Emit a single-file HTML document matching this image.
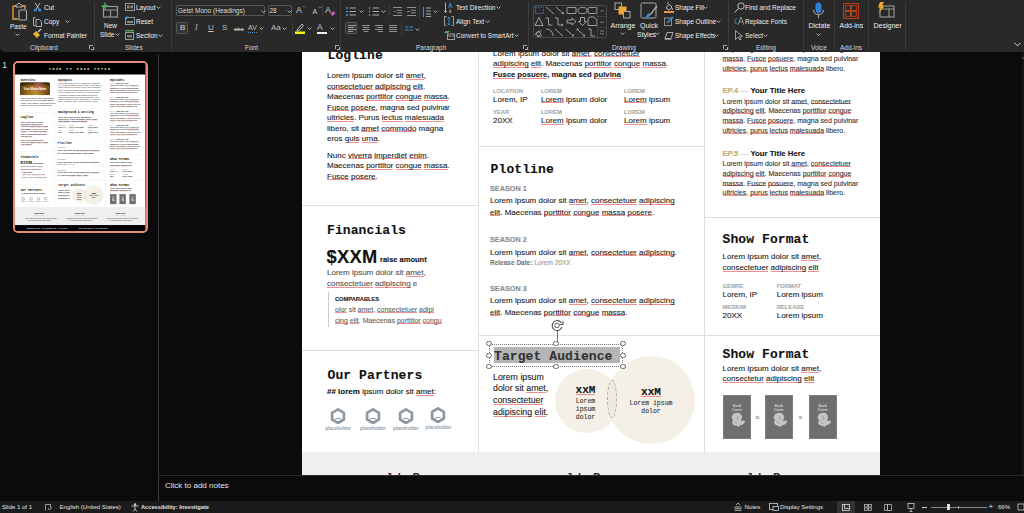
<!DOCTYPE html>
<html><head><meta charset="utf-8">
<style>
*{margin:0;padding:0;box-sizing:border-box}
html,body{width:1024px;height:513px;overflow:hidden;background:#0b0b0b;font-family:"Liberation Sans",sans-serif}
#ribbon{position:absolute;left:0;top:0;width:1024px;height:52px;background:#292929;border-radius:0 0 0 5px;box-shadow:0 0.5px 1px rgba(0,0,0,0.6)}
#ribbon .t{position:absolute;font-size:6.5px;line-height:8px;color:#efefef;white-space:nowrap}
#ribbon .g{color:#d8d8d8}
#ribbon .ic{position:absolute;overflow:visible}
.chev{position:absolute;width:3px;height:3px;border-right:0.8px solid #ccc;border-bottom:0.8px solid #ccc;transform:rotate(45deg)}
.sep{position:absolute;top:2px;width:1px;height:48px;background:#3d3d3d}
.vsep{position:absolute;width:1px;background:#3d3d3d}
.box{position:absolute;border:1px solid #555;border-radius:2px}
.la{position:absolute;width:4.5px;height:4.5px;border-left:0.7px solid #aaa;border-top:0.7px solid #aaa;margin:0.5px 0 0 0.5px}
.la:after{content:"";position:absolute;left:1.2px;top:1.2px;width:2.5px;height:2.5px;border-right:0.8px solid #aaa;border-bottom:0.8px solid #aaa}
#left{position:absolute;left:0;top:52px;width:158px;height:449px;background:#0b0b0b}
#vdiv{position:absolute;left:158px;top:54px;width:1px;height:447px;background:#3a3a3a}
#num{position:absolute;left:2.3px;top:8px;font-size:8.5px;color:#ddd;transform:scaleY(1.1)}
#thumb{position:absolute;left:13px;top:9px;width:134.5px;height:172px;border:2px solid #e88c78;border-radius:5px;overflow:hidden;background:#000}
#thumb .sc{position:absolute;left:0;top:0;width:578px;height:745px;transform:scale(0.2257,0.2257);transform-origin:0 0}
#canvas{position:absolute;left:159px;top:52px;width:865px;height:423px;overflow:hidden;background:#0b0b0b}
#canvas .sc{position:absolute;left:143px;top:-238px;width:578px;height:745px}
#notes{position:absolute;left:159px;top:475px;width:865px;height:26px;background:#0b0b0b;border-top:1.5px solid #2a2a2a}
#notes span{position:absolute;left:6px;top:5px;font-size:8px;color:#e4e4e4}
#status{position:absolute;left:0;top:501px;width:1024px;height:12px;background:#1b1b1b}
#status .t{position:absolute;top:2.5px;font-size:6px;line-height:7px;color:#e2e2e2;white-space:nowrap}
/* slide */
.sl{position:relative;width:578px;height:745px;background:#fff;overflow:hidden;color:#1a1a1a;-webkit-text-stroke:0.1px currentColor}
.sl div{position:absolute;white-space:nowrap}
.hdr{left:0;top:0;width:578px;height:51px;background:#000}
.hdr span{position:absolute;left:0;width:578px;top:17px;text-align:center;font:bold 14px/16px "Liberation Mono",monospace;letter-spacing:7px;color:#f4ecd8}
.vl{width:1px;background:#dedede}
.hl{height:1px;background:#dedede}
.h{font:bold 13px/15px "Liberation Mono",monospace;color:#111;letter-spacing:0.1px}
.p{font-size:8px;line-height:10.5px;color:#222}
.p u,.v u,.p7 u,.m u{text-decoration:none;background:linear-gradient(#f08080,#f08080) 0 calc(100% - 0.3px)/100% 0.9px no-repeat}
#thumb .sel{display:none}
.hd{width:5.2px;height:5.2px;border-radius:50%;background:#fff;border:0.8px solid #666}
.b{font-weight:bold;line-height:1.15;color:#111}
.big{letter-spacing:0.3px;font:bold 18.3px/1.15 "Liberation Sans",sans-serif;color:#111}
.lab{font-weight:bold;font-size:5.8px;line-height:7px;color:#a8a8a8}
.v{font-size:8px;line-height:9px;color:#222;margin-top:0.7px}
.ssn{font-weight:bold;font-size:7.3px;line-height:8px;color:#8a8a8a}
.img{border-radius:7px;background:radial-gradient(ellipse 30px 35px at 62% 30%,rgba(190,90,90,0.9),rgba(160,80,60,0) 100%),linear-gradient(180deg,rgba(20,10,0,0.85) 0%,rgba(20,10,0,0) 35%),linear-gradient(100deg,#4a3510 0%,#9a7020 30%,#c09030 55%,#8a6020 80%,#5a3a10 100%)}
.img span{position:absolute;left:0;width:100%;top:22px;text-align:center;font-weight:bold;font-size:12.4px;line-height:14px;color:#fff}
.logo{width:16px;height:22px}
.logo svg{position:absolute;left:0;top:0}
.logo i{position:absolute;left:-7px;top:17px;width:30px;text-align:center;font-style:normal;font-weight:bold;font-size:4.6px;line-height:7px;color:#a3abb3}
.circ{border-radius:50%;background:#f4f0e8}
.m{font-family:"Liberation Mono",monospace;text-align:center;white-space:nowrap}
.ep{width:170px;height:60px}
.ep div{position:relative}
.et{font-weight:bold;font-size:7.8px;line-height:9px;color:#111}
.et span{color:#c6ad72}
.et em{font-style:normal;color:#bbb;font-weight:normal}
.p7{font-size:7px;line-height:9.77px;color:#333;margin-top:1.5px}
.book{width:27.5px;height:44.5px;background:#6f6f6f;border:1px solid #7d7d7d}
.book i{position:absolute;left:0;width:100%;top:8px;text-align:center;font:normal 3.5px/4px "Liberation Serif",serif;color:#ddd;letter-spacing:0.2px}
.book b{position:absolute;left:8px;top:16px;width:12px;height:18px;border-radius:50% 50% 30% 40%;background:#bdbdbd}
.x{font-size:8px;color:#7a8fa0}
.ft{left:0;top:638px;width:578px;height:80px;background:#efefef}
.jd{width:124px;text-align:center;font:bold 10.5px/13px "Liberation Sans",sans-serif;letter-spacing:-0.2px;color:#2a2a2a}
.jd small{display:block;margin-top:3px;font:normal 5px/8px "Liberation Sans",sans-serif;color:#b8a070;letter-spacing:1px}
.jd p{margin-top:4px;font:normal 6px/9.3px "Liberation Sans",sans-serif;color:#555;letter-spacing:0}
.fb{left:0;top:718px;width:578px;height:27px;background:#000}
.fb span{position:relative;display:inline-block;margin:12px 0 0 50px;font:bold 5.5px "Liberation Mono",monospace;color:#d8d0e0}
</style></head><body>
<div id="ribbon">
<!-- Clipboard -->
<svg class="ic" style="left:11px;top:2px" width="18" height="19" viewBox="0 0 18 19"><path d="M2 4h3M11 4h3v3M2 4v13h5" fill="none" stroke="#f0a830" stroke-width="1.3"/><path d="M5 3.5l3-2.5 3 2.5v1.5H5z" fill="none" stroke="#bbb" stroke-width="1"/><rect x="8" y="8" width="7.5" height="10" rx="1" fill="none" stroke="#aaa" stroke-width="1.1"/></svg>
<div class="t" style="left:10px;top:22.5px">Paste</div>
<svg class="ic" style="left:14.8px;top:32.5px" width="5" height="3" viewBox="0 0 5 3"><path d="M0.6 0.6l1.9 1.9 1.9-1.9" fill="none" stroke="#d0d0d0" stroke-width="0.85"/></svg>
<svg class="ic" style="left:33px;top:3px" width="9" height="9" viewBox="0 0 9 9"><path d="M2 0l4 6M7 0L3 6" stroke="#ccc" stroke-width="0.9"/><circle cx="2.3" cy="7" r="1.6" fill="#3b8fd9"/><circle cx="6.7" cy="7" r="1.6" fill="#3b8fd9"/></svg>
<div class="t" style="left:44px;top:3.5px">Cut</div>
<svg class="ic" style="left:33px;top:16px" width="9" height="11" viewBox="0 0 9 11"><path d="M2.5 1.5h-2v8h2M3 3.5h3.5l2 2v5h-5.5z" fill="none" stroke="#bbb" stroke-width="0.9"/></svg>
<div class="t" style="left:44px;top:18px">Copy</div>
<svg class="ic" style="left:64.5px;top:19.8px" width="5" height="3" viewBox="0 0 5 3"><path d="M0.6 0.6l1.9 1.9 1.9-1.9" fill="none" stroke="#d0d0d0" stroke-width="0.85"/></svg>
<svg class="ic" style="left:32px;top:29px" width="10" height="10" viewBox="0 0 10 10"><path d="M1 5l4 4 3-3-4-4z" fill="#f0b030"/><path d="M6 3l3-3" stroke="#ccc" stroke-width="1.2"/></svg>
<div class="t" style="left:44px;top:32px">Format Painter</div>
<div class="t g" style="left:30px;top:43.5px">Clipboard</div>
<div class="la"  style="left:88px;top:44px"></div>
<div class="sep" style="left:94px"></div>
<!-- Slides -->
<svg class="ic" style="left:101px;top:2px" width="18" height="16" viewBox="0 0 18 16"><rect x="2.5" y="4.5" width="14" height="10.5" fill="none" stroke="#999" stroke-width="1.2"/><path d="M2.5 8h14M9.5 8v7" stroke="#999" stroke-width="1.2"/><path d="M4 0.5v7M0.5 4h7" stroke="#4cb85c" stroke-width="1.3"/></svg>
<div class="t" style="left:104px;top:22px">New</div>
<div class="t" style="left:100px;top:30.5px">Slide</div>
<svg class="ic" style="left:114.8px;top:32.5px" width="5" height="3" viewBox="0 0 5 3"><path d="M0.6 0.6l1.9 1.9 1.9-1.9" fill="none" stroke="#d0d0d0" stroke-width="0.85"/></svg>
<svg class="ic" style="left:125px;top:3px" width="10" height="8" viewBox="0 0 10 8"><rect x="0.5" y="0.5" width="9" height="7" fill="none" stroke="#999"/><rect x="2" y="2.5" width="2.5" height="3" fill="#888"/><rect x="5.5" y="2.5" width="2.5" height="3" fill="#888"/></svg>
<div class="t" style="left:136px;top:3.5px">Layout</div>
<svg class="ic" style="left:156.0px;top:6.1px" width="5" height="3" viewBox="0 0 5 3"><path d="M0.6 0.6l1.9 1.9 1.9-1.9" fill="none" stroke="#d0d0d0" stroke-width="0.85"/></svg>
<svg class="ic" style="left:125px;top:16px" width="10" height="9" viewBox="0 0 10 9"><rect x="0.5" y="1.5" width="9" height="7" fill="none" stroke="#999"/><rect x="2" y="5" width="6" height="2" fill="#888"/><path d="M1 3.5l2-2.5M1 1h2.5" stroke="#3b8fd9" stroke-width="1.2"/></svg>
<div class="t" style="left:136px;top:18px">Reset</div>
<svg class="ic" style="left:125px;top:30px" width="9" height="10" viewBox="0 0 9 10"><path d="M0 0.7h9" stroke="#4cb85c" stroke-width="1.3"/><rect x="0.5" y="2.5" width="8" height="7" fill="none" stroke="#999"/><rect x="2" y="5" width="5" height="2.5" fill="#777"/></svg>
<div class="t" style="left:136px;top:32px">Section</div>
<svg class="ic" style="left:157.7px;top:34.0px" width="5" height="3" viewBox="0 0 5 3"><path d="M0.6 0.6l1.9 1.9 1.9-1.9" fill="none" stroke="#d0d0d0" stroke-width="0.85"/></svg>
<div class="t g" style="left:125px;top:43.5px">Slides</div>
<div class="sep" style="left:171px"></div>
<!-- Font -->
<div class="box" style="left:176px;top:5px;width:89px;height:11px"></div>
<div class="t" style="left:178px;top:7px;color:#ddd">Geist Mono (Headings)</div>
<svg class="ic" style="left:260.5px;top:10.1px" width="5" height="3" viewBox="0 0 5 3"><path d="M0.6 0.6l1.9 1.9 1.9-1.9" fill="none" stroke="#d0d0d0" stroke-width="0.85"/></svg>
<div class="box" style="left:268px;top:5px;width:24px;height:11px"></div>
<div class="t" style="left:269.5px;top:7px;color:#ddd">28</div>
<svg class="ic" style="left:286.8px;top:10.1px" width="5" height="3" viewBox="0 0 5 3"><path d="M0.6 0.6l1.9 1.9 1.9-1.9" fill="none" stroke="#d0d0d0" stroke-width="0.85"/></svg>
<div class="t" style="left:296px;top:6px;font-size:9px;color:#ccc">A</div><svg class="ic" style="left:302px;top:5px" width="4" height="3" viewBox="0 0 4 3"><path d="M0.5 2.5l1.5-1.5 1.5 1.5" fill="none" stroke="#3b8fd9" stroke-width="0.8"/></svg>
<div class="t" style="left:312.5px;top:8px;font-size:7px;color:#ccc">A</div><svg class="ic" style="left:317.5px;top:6px" width="4" height="3" viewBox="0 0 4 3"><path d="M0.5 0.5l1.5 1.5 1.5-1.5" fill="none" stroke="#3b8fd9" stroke-width="0.8"/></svg>
<div class="vsep" style="left:322px;top:5px;height:12px"></div>
<div class="t" style="left:325px;top:6px;font-size:9px;color:#ccc">A</div>
<div style="position:absolute;left:331px;top:12px;width:4px;height:3px;background:#c060c0;transform:rotate(-40deg)"></div>
<div class="box" style="left:176px;top:22px;width:12px;height:12px;background:#333"></div>
<div class="t" style="left:180px;top:24px;font-size:8px;color:#ddd">B</div>
<div class="t" style="left:195px;top:24px;font-size:8px;font-style:italic;color:#bbb;font-family:'Liberation Serif'">I</div>
<div class="t" style="left:208px;top:24px;font-size:8px;text-decoration:underline;color:#bbb">U</div>
<div class="t" style="left:222px;top:24px;font-size:8px;color:#bbb">S</div>
<div class="t" style="left:234px;top:25px;font-size:6px;text-decoration:line-through;color:#bbb">abc</div>
<div class="t" style="left:248px;top:23.5px;font-size:7px;color:#bbb">AV</div>
<div style="position:absolute;left:248px;top:32px;width:9px;height:1px;border-top:1px dotted #3b8fd9"></div>
<svg class="ic" style="left:259.2px;top:27.1px" width="5" height="3" viewBox="0 0 5 3"><path d="M0.6 0.6l1.9 1.9 1.9-1.9" fill="none" stroke="#d0d0d0" stroke-width="0.85"/></svg>
<div class="t" style="left:271px;top:24px;font-size:8px;color:#bbb">Aa</div>
<svg class="ic" style="left:282.1px;top:27.1px" width="5" height="3" viewBox="0 0 5 3"><path d="M0.6 0.6l1.9 1.9 1.9-1.9" fill="none" stroke="#d0d0d0" stroke-width="0.85"/></svg>
<div class="vsep" style="left:292px;top:22px;height:13px"></div>
<svg class="ic" style="left:295px;top:22px" width="10" height="12" viewBox="0 0 10 12"><path d="M2 8l5-6 1.5 1.5-5 5.5H2z" fill="none" stroke="#ccc" stroke-width="0.9"/><rect x="0" y="9.5" width="10" height="2.5" fill="#f2f200"/></svg>
<svg class="ic" style="left:307.4px;top:27.1px" width="5" height="3" viewBox="0 0 5 3"><path d="M0.6 0.6l1.9 1.9 1.9-1.9" fill="none" stroke="#d0d0d0" stroke-width="0.85"/></svg>
<div class="t" style="left:317px;top:22.5px;font-size:8.5px;color:#ccc">A</div>
<div style="position:absolute;left:317px;top:31.5px;width:10px;height:2.5px;background:#eee"></div>
<svg class="ic" style="left:329.5px;top:27.1px" width="5" height="3" viewBox="0 0 5 3"><path d="M0.6 0.6l1.9 1.9 1.9-1.9" fill="none" stroke="#d0d0d0" stroke-width="0.85"/></svg>
<div class="t g" style="left:245px;top:43.5px">Font</div>
<div class="la"  style="left:334px;top:44px"></div>
<div class="sep" style="left:340px"></div>
<!-- Paragraph -->
<svg class="ic" style="left:346px;top:7px" width="10" height="9" viewBox="0 0 10 9"><path d="M0 1h2M0 4.5h2M0 8h2" stroke="#3b8fd9" stroke-width="1.4"/><path d="M3.5 1h6.5M3.5 4.5h6.5M3.5 8h6.5" stroke="#aaa" stroke-width="1"/></svg>
<svg class="ic" style="left:358.8px;top:9.9px" width="5" height="3" viewBox="0 0 5 3"><path d="M0.6 0.6l1.9 1.9 1.9-1.9" fill="none" stroke="#d0d0d0" stroke-width="0.85"/></svg>
<svg class="ic" style="left:369px;top:7px" width="10" height="9" viewBox="0 0 10 9"><path d="M0.5 0v2M0.5 3.5v2M0.5 7v2" stroke="#3b8fd9" stroke-width="1.2"/><path d="M3.5 1h6.5M3.5 4.5h6.5M3.5 8h6.5" stroke="#aaa" stroke-width="1"/></svg>
<svg class="ic" style="left:381.1px;top:9.9px" width="5" height="3" viewBox="0 0 5 3"><path d="M0.6 0.6l1.9 1.9 1.9-1.9" fill="none" stroke="#d0d0d0" stroke-width="0.85"/></svg>
<div class="vsep" style="left:389px;top:5px;height:13px"></div>
<svg class="ic" style="left:393px;top:7px" width="9" height="9" viewBox="0 0 9 9"><path d="M0 0.5h9M4 3.3h5M4 5.8h5M0 8.5h9" stroke="#999" stroke-width="0.9"/><path d="M0.5 4.5h2.5" stroke="#3b8fd9" stroke-width="1"/></svg>
<svg class="ic" style="left:407px;top:7px" width="9" height="9" viewBox="0 0 9 9"><path d="M0 0.5h9M4 3.3h5M4 5.8h5M0 8.5h9" stroke="#999" stroke-width="0.9"/><path d="M0 4.5h3" stroke="#3b8fd9" stroke-width="1.2"/></svg>
<div class="vsep" style="left:419px;top:5px;height:13px"></div>
<svg class="ic" style="left:422px;top:7px" width="9" height="10" viewBox="0 0 9 10"><path d="M1.5 0v10" stroke="#3b8fd9" stroke-width="1.2"/><path d="M4 1h5M4 4h5M4 7h5M4 9.5h5" stroke="#aaa" stroke-width="1"/></svg>
<svg class="ic" style="left:433.1px;top:9.9px" width="5" height="3" viewBox="0 0 5 3"><path d="M0.6 0.6l1.9 1.9 1.9-1.9" fill="none" stroke="#d0d0d0" stroke-width="0.85"/></svg>
<div class="box" style="left:345px;top:22px;width:12px;height:12px;background:#333"></div>
<svg class="ic" style="left:348px;top:25px" width="8" height="7" viewBox="0 0 8 7"><path d="M0 0.5h8M0 2.5h6M0 4.5h8M0 6.5h5" stroke="#bbb" stroke-width="0.8"/></svg>
<svg class="ic" style="left:362px;top:25px" width="8" height="7" viewBox="0 0 8 7"><path d="M0 0.5h8M1 2.5h6M0 4.5h8M1.5 6.5h5" stroke="#aaa" stroke-width="0.8"/></svg>
<svg class="ic" style="left:375px;top:25px" width="8" height="7" viewBox="0 0 8 7"><path d="M0 0.5h8M2 2.5h6M0 4.5h8M3 6.5h5" stroke="#aaa" stroke-width="0.8"/></svg>
<svg class="ic" style="left:389px;top:25px" width="8" height="7" viewBox="0 0 8 7"><path d="M0 0.5h8M0 2.5h8M0 4.5h8M0 6.5h8" stroke="#aaa" stroke-width="0.8"/></svg>
<div class="vsep" style="left:401px;top:22px;height:13px"></div>
<svg class="ic" style="left:405px;top:26px" width="8" height="5" viewBox="0 0 8 5"><path d="M0 1h3.5M4.5 1h3.5M0 4h3.5M4.5 4h3.5" stroke="#3b8fd9" stroke-width="1.2"/></svg>
<svg class="ic" style="left:415.4px;top:27.5px" width="5" height="3" viewBox="0 0 5 3"><path d="M0.6 0.6l1.9 1.9 1.9-1.9" fill="none" stroke="#d0d0d0" stroke-width="0.85"/></svg>
<svg class="ic" style="left:444px;top:2px" width="9" height="11" viewBox="0 0 9 11"><path d="M1.5 0.5v10M0 9l1.5 1.5 1.5-1.5" fill="none" stroke="#bbb" stroke-width="0.9"/><path d="M4.5 6l1.7-5 1.7 5M5.2 4h2" fill="none" stroke="#3b8fd9" stroke-width="0.9"/><path d="M6.2 7v3.5M5 9.5l1.2 1 1.2-1" fill="none" stroke="#bbb" stroke-width="0.8"/></svg>
<div class="t" style="left:456px;top:3.5px">Text Direction</div>
<svg class="ic" style="left:495.9px;top:5.7px" width="5" height="3" viewBox="0 0 5 3"><path d="M0.6 0.6l1.9 1.9 1.9-1.9" fill="none" stroke="#d0d0d0" stroke-width="0.85"/></svg>
<svg class="ic" style="left:444px;top:16px" width="10" height="10" viewBox="0 0 10 10"><path d="M2.5 0.5h-2v9h2M7.5 0.5h2v9h-2" fill="none" stroke="#bbb" stroke-width="0.8"/><path d="M5 1v8M3.5 2.5L5 1l1.5 1.5M3.5 7.5L5 9l1.5-1.5" fill="none" stroke="#3b8fd9" stroke-width="0.9"/></svg>
<div class="t" style="left:456px;top:18px">Align Text</div>
<svg class="ic" style="left:484.9px;top:19.8px" width="5" height="3" viewBox="0 0 5 3"><path d="M0.6 0.6l1.9 1.9 1.9-1.9" fill="none" stroke="#d0d0d0" stroke-width="0.85"/></svg>
<svg class="ic" style="left:444px;top:30px" width="11" height="10" viewBox="0 0 11 10"><path d="M0 3l2-2h4l-2 2z" fill="#4cb85c"/><rect x="3.5" y="4" width="7" height="5.5" fill="none" stroke="#aaa" stroke-width="0.9"/><path d="M3.5 6h7" stroke="#aaa" stroke-width="0.8"/></svg>
<div class="t" style="left:456px;top:32px">Convert to SmartArt</div>
<svg class="ic" style="left:514.4px;top:33.7px" width="5" height="3" viewBox="0 0 5 3"><path d="M0.6 0.6l1.9 1.9 1.9-1.9" fill="none" stroke="#d0d0d0" stroke-width="0.85"/></svg>
<div class="t g" style="left:416px;top:43.5px">Paragraph</div>
<div class="la"  style="left:522px;top:44px"></div>
<div class="sep" style="left:528px"></div>
<!-- Drawing -->
<div class="box" style="left:533px;top:5px;width:74px;height:33px;border-color:#4a4a4a"></div>
<svg class="ic" style="left:533px;top:5px" width="74" height="34" viewBox="0 0 74 34">
<g fill="none" stroke="#bbb" stroke-width="0.8">
<rect x="2.5" y="2" width="8" height="6.5" stroke="#3b8fd9" stroke-dasharray="1.5 1"/>
<path d="M13 2l8 7M23 2l7.5 7M30 8.5h-1.5M30.5 7v1.5"/>
<rect x="34" y="2.5" width="9" height="6" rx="0.5"/>
<ellipse cx="49.5" cy="5.5" rx="4.5" ry="3.2"/>
<rect x="55" y="2.5" width="9" height="6" rx="1.5"/>
<path d="M2 20.5l4-8 4 8z"/>
<path d="M12.5 13h3v7h4"/><path d="M22 13h3v7h5M28.5 19l1.5 1-1.5 1"/>
<path d="M34 15h5v-2l4 3.5-4 3.5v-2h-5z"/>
<path d="M47.5 12.5h4v4h2l-4 4-4-4h2z"/>
<path d="M55 20.5v-6c0-2 1-2.5 3-2.5h3l3 3v5.5z"/>
<path d="M2.5 30c0-3 4-4 5-2s-3 4-4 2 3-5 5-4M9 30c-1 1.5-3 2-5 1"/>
<path d="M13 24c4 0 7 3 7 7M22 24l8 7M32.5 24l8 7M40.5 29.5V31H39M44 24l7.5 7M44 25.5V24h1.5M51.5 29.5V31H50M55 24h3v7h4"/>
</g>
<path d="M64.5 0v34M64.5 11.5h9.5M64.5 22.5h9.5" stroke="#4a4a4a" stroke-width="0.8"/>
<path d="M67.5 6.5l1.5-1.5 1.5 1.5M67 16.5l2 1.5 2-1.5M67 26h4M67 28l2 1.5 2-1.5" fill="none" stroke="#999" stroke-width="0.8"/>
</svg>
<div class="la"  style="left:522px;top:44px"></div>
<svg class="ic" style="left:614px;top:2px" width="17" height="17" viewBox="0 0 17 17"><rect x="1" y="1" width="6.5" height="6.5" fill="none" stroke="#aaa" stroke-width="1"/><rect x="4.5" y="4.5" width="8" height="8" fill="#f0a830"/><rect x="9.5" y="9.5" width="6.5" height="6.5" fill="#2a2a2a" stroke="#aaa" stroke-width="1"/></svg>
<div class="t" style="left:610.5px;top:21.8px;font-size:7px">Arrange</div>
<svg class="ic" style="left:619.8px;top:32.0px" width="5" height="3" viewBox="0 0 5 3"><path d="M0.6 0.6l1.9 1.9 1.9-1.9" fill="none" stroke="#d0d0d0" stroke-width="0.85"/></svg>
<svg class="ic" style="left:640px;top:2px" width="18" height="18" viewBox="0 0 18 18"><rect x="1" y="1" width="15" height="15" rx="1.5" fill="none" stroke="#aaa" stroke-width="1"/><path d="M17 4l-7 9" stroke="#ccc" stroke-width="1.2"/><path d="M7 13c1-2 3-2 3.5-0.5-0.5 2-3 3.5-5.5 4z" fill="#3b8fd9"/></svg>
<div class="t" style="left:640px;top:21.8px;font-size:7px">Quick</div>
<div class="t" style="left:637px;top:30.5px;font-size:7px">Styles</div>
<svg class="ic" style="left:654.9px;top:32.0px" width="5" height="3" viewBox="0 0 5 3"><path d="M0.6 0.6l1.9 1.9 1.9-1.9" fill="none" stroke="#d0d0d0" stroke-width="0.85"/></svg>
<div class="t g" style="left:612px;top:43.5px">Drawing</div>
<svg class="ic" style="left:664px;top:2px" width="10" height="11" viewBox="0 0 10 11"><path d="M2 6l3-4 3 3-3 3z" fill="none" stroke="#ccc" stroke-width="0.9"/><path d="M3.5 1.5l1-1.5" stroke="#ccc"/><path d="M8 6c0.5 1 0.5 2-0.3 2" stroke="#ccc" fill="none"/><rect x="0" y="9" width="10" height="2" fill="#f09040"/></svg>
<div class="t" style="left:675px;top:3.5px">Shape Fill</div>
<svg class="ic" style="left:703.3px;top:5.5px" width="5" height="3" viewBox="0 0 5 3"><path d="M0.6 0.6l1.9 1.9 1.9-1.9" fill="none" stroke="#d0d0d0" stroke-width="0.85"/></svg>
<svg class="ic" style="left:664px;top:16px" width="10" height="10" viewBox="0 0 10 10"><rect x="0.5" y="2" width="7" height="7.5" fill="none" stroke="#aaa" stroke-width="0.8"/><path d="M3 7l6-6" stroke="#3b8fd9" stroke-width="1.6"/></svg>
<div class="t" style="left:675px;top:18px">Shape Outline</div>
<svg class="ic" style="left:716.2px;top:19.6px" width="5" height="3" viewBox="0 0 5 3"><path d="M0.6 0.6l1.9 1.9 1.9-1.9" fill="none" stroke="#d0d0d0" stroke-width="0.85"/></svg>
<svg class="ic" style="left:664px;top:30px" width="10" height="10" viewBox="0 0 10 10"><path d="M1 8.5l2-6h6l-2 6z" fill="none" stroke="#bbb" stroke-width="0.9"/><path d="M0.5 9.5h7" stroke="#888"/></svg>
<div class="t" style="left:675px;top:32px">Shape Effects</div>
<svg class="ic" style="left:714.4px;top:33.7px" width="5" height="3" viewBox="0 0 5 3"><path d="M0.6 0.6l1.9 1.9 1.9-1.9" fill="none" stroke="#d0d0d0" stroke-width="0.85"/></svg>
<div class="la"  style="left:722px;top:44px"></div>
<div class="sep" style="left:727.5px"></div>
<!-- Editing -->
<svg class="ic" style="left:734px;top:2px" width="11" height="11" viewBox="0 0 11 11"><circle cx="7" cy="4" r="3.2" fill="none" stroke="#ccc" stroke-width="0.9"/><path d="M4.6 6.4L0.5 10.5" stroke="#ccc" stroke-width="1"/></svg>
<div class="t" style="left:745px;top:3.5px">Find and Replace</div>
<svg class="ic" style="left:734px;top:16px" width="11" height="10" viewBox="0 0 11 10"><path d="M4 9l3-8 3 8M5.2 6h3.5" fill="none" stroke="#aaa" stroke-width="0.8"/><path d="M3 2.5C1 3 0.5 5 1.5 6.5M0.5 7.5l1.5-1 1 1.5" fill="none" stroke="#3b8fd9" stroke-width="0.9"/></svg>
<div class="t" style="left:745px;top:18px">Replace Fonts</div>
<svg class="ic" style="left:735px;top:30px" width="8" height="10" viewBox="0 0 8 10"><path d="M0.5 0.5v9l2.5-2.5 1.7 3 1.5-0.8-1.7-3H7.5z" fill="none" stroke="#bbb" stroke-width="0.8"/></svg>
<div class="t" style="left:745px;top:32px">Select</div>
<svg class="ic" style="left:763.1px;top:33.7px" width="5" height="3" viewBox="0 0 5 3"><path d="M0.6 0.6l1.9 1.9 1.9-1.9" fill="none" stroke="#d0d0d0" stroke-width="0.85"/></svg>
<div class="t g" style="left:756px;top:43.5px">Editing</div>
<div class="sep" style="left:802.5px"></div>
<svg class="ic" style="left:812px;top:2px" width="13" height="17" viewBox="0 0 13 17"><rect x="3.5" y="0.5" width="6" height="10.5" rx="3" fill="#2f7fd6"/><path d="M1.5 8c0 3 2 4.5 5 4.5s5-1.5 5-4.5M6.5 12.5V16" fill="none" stroke="#bbb" stroke-width="0.9"/></svg>
<div class="t" style="left:808.5px;top:21.8px;font-size:7px">Dictate</div>
<svg class="ic" style="left:815.9px;top:32.5px" width="5" height="3" viewBox="0 0 5 3"><path d="M0.6 0.6l1.9 1.9 1.9-1.9" fill="none" stroke="#d0d0d0" stroke-width="0.85"/></svg>
<div class="t g" style="left:811px;top:43.5px">Voice</div>
<div class="sep" style="left:834px"></div>
<svg class="ic" style="left:843px;top:3px" width="16" height="16" viewBox="0 0 16 16"><rect x="0.6" y="0.6" width="14.8" height="14.8" fill="none" stroke="#c4401a" stroke-width="1"/><rect x="2.7" y="2.7" width="4.8" height="4.8" fill="none" stroke="#c4401a" stroke-width="0.9"/><rect x="8.5" y="2.7" width="4.8" height="4.8" fill="none" stroke="#c4401a" stroke-width="0.9"/><rect x="2.7" y="8.5" width="4.8" height="4.8" fill="none" stroke="#c4401a" stroke-width="0.9"/><rect x="8.5" y="8.5" width="4.8" height="4.8" fill="none" stroke="#c4401a" stroke-width="0.9"/></svg>
<div class="t" style="left:839.5px;top:21.5px;font-size:7px">Add-ins</div>
<div class="t g" style="left:840px;top:43.5px">Add-ins</div>
<div class="sep" style="left:868px"></div>
<svg class="ic" style="left:877px;top:2px" width="18" height="16" viewBox="0 0 18 16"><rect x="3" y="4" width="14" height="11" fill="none" stroke="#999" stroke-width="1.1"/><path d="M3 7h14M12 7v8" stroke="#999" stroke-width="1.1"/><path d="M3 0h4l-2 4h2.5L2 11l1.5-5.5H1z" fill="#f0a830"/></svg>
<div class="t" style="left:873.5px;top:21.5px;font-size:7px">Designer</div>
<div class="sep" style="left:904.5px"></div>
<svg class="ic" style="left:1014px;top:42px" width="7" height="5" viewBox="0 0 7 5"><path d="M0.5 0.8l3 3 3-3" fill="none" stroke="#ddd" stroke-width="1"/></svg>
</div>
<div id="left"><div id="num">1</div><div id="thumb"><div class="sc"><div class="sl">
<div class="hdr"><span>YOUR TV SHOW PITCH</span></div>
<div class="vl" style="left:176px;top:51px;height:587px"></div>
<div class="vl" style="left:402px;top:51px;height:587px"></div>
<div class="hl" style="left:0;width:176px;top:218px"></div>
<div class="hl" style="left:0;width:176px;top:391px"></div>
<div class="hl" style="left:0;width:176px;top:536px"></div>
<div class="hl" style="left:176px;width:226px;top:203px"></div>
<div class="hl" style="left:176px;width:226px;top:332px"></div>
<div class="hl" style="left:176px;width:226px;top:521px"></div>
<div class="hl" style="left:402px;width:176px;top:403px"></div>
<div class="hl" style="left:402px;width:176px;top:521px"></div>
<!-- LEFT -->
<div class="h" style="left:25px;top:68px">Overview</div>
<div class="img" style="left:22px;top:85px;width:133px;height:58px"><span>Your Show Name</span></div>
<div class="p" style="left:25px;top:152px;color:#444">Lorem ipsum dolor sit amet, consectetuer<br>adipiscing elit. Maecenas porttitor congue<br>massa. Fusce posuere, magna sed pulvinar<br>ultricies, purus lectus malesuada libero.</div>
<div class="h" style="left:25.5px;top:233.5px">Logline</div>
<div class="p" style="left:25px;top:257px">Lorem ipsum dolor sit <u>amet</u>,<br><u>consectetuer</u> <u>adipiscing</u> <u>elit</u>.<br>Maecenas <u>porttitor</u> <u>congue</u> <u>massa</u>.<br><u>Fusce</u> <u>posere</u>, magna sed pulvinar<br><u>ultricies</u>. Purus <u>lectus</u> <u>malesuada</u><br>libero, sit <u>amet</u> <u>commodo</u> magna<br>eros <u>quis</u> <u>urna</u>.</div>
<div class="p" style="left:25px;top:336.5px">Nunc <u>viverra</u> <u>imperdiet</u> <u>enim</u>.<br>Maecenas <u>porttitor</u> <u>congue</u> <u>massa</u>.<br><u>Fusce</u> <u>posere</u>.</div>
<div class="h" style="left:25px;top:409px">Financials</div>
<div class="big" style="left:24.5px;top:431.5px">$XXM</div>
<div class="b" style="left:78px;top:442px;font-size:7.5px">raise amount</div>
<div class="p" style="left:25px;top:453px;line-height:11.2px;color:#505050">Lorem ipsum dolor sit <u>amet</u>,<br><u>consectetuer</u> <u>adipiscing</u> e</div>
<div class="vl" style="left:25.5px;top:478px;height:35px;background:#ccc"></div>
<div class="b" style="left:33px;top:482px;font-size:5.7px;color:#222">COMPARABLES</div>
<div class="p" style="left:33px;top:491px;font-size:7px;line-height:10.7px;color:#666"><u>olor</u> sit <u>amet</u>, <u>consectetuer</u> <u>adipi</u><br><u>cing</u> <u>elit</u>. Maecenas <u>porttitor</u> <u>congu</u></div>
<div class="h" style="left:25.5px;top:553.5px">Our Partners</div>
<div class="p" style="left:25px;top:573.4px;color:#111"><b>## lorem</b> ipsum dolor sit <u>amet</u>:</div>
<div class="logo" style="left:28.1px;top:593.5px"><svg width="16" height="16" viewBox="0 0 16 16"><path d="M8 1.4l5.9 3.4v6.8L8 15 2.1 11.6V4.8z" fill="none" stroke="#8d98a2" stroke-width="2.7" stroke-linejoin="round"/><path d="M4.5 11.5c1.2-1.6 5.8-1.6 7 0" fill="none" stroke="#8d98a2" stroke-width="1"/></svg><i>placeholder</i></div>
<div class="logo" style="left:63.0px;top:593.5px"><svg width="16" height="16" viewBox="0 0 16 16"><path d="M8 1.4l5.9 3.4v6.8L8 15 2.1 11.6V4.8z" fill="none" stroke="#8d98a2" stroke-width="2.7" stroke-linejoin="round"/><path d="M4.5 11.5c1.2-1.6 5.8-1.6 7 0" fill="none" stroke="#8d98a2" stroke-width="1"/></svg><i>placeholder</i></div>
<div class="logo" style="left:96.0px;top:593.5px"><svg width="16" height="16" viewBox="0 0 16 16"><path d="M8 1.4l5.9 3.4v6.8L8 15 2.1 11.6V4.8z" fill="none" stroke="#8d98a2" stroke-width="2.7" stroke-linejoin="round"/><path d="M4.5 11.5c1.2-1.6 5.8-1.6 7 0" fill="none" stroke="#8d98a2" stroke-width="1"/></svg><i>placeholder</i></div>
<div class="logo" style="left:128.4px;top:592.7px"><svg width="16" height="16" viewBox="0 0 16 16"><path d="M8 1.4l5.9 3.4v6.8L8 15 2.1 11.6V4.8z" fill="none" stroke="#8d98a2" stroke-width="2.7" stroke-linejoin="round"/><path d="M4.5 11.5c1.2-1.6 5.8-1.6 7 0" fill="none" stroke="#8d98a2" stroke-width="1"/></svg><i>placeholder</i></div>
<!-- MIDDLE -->
<div class="h" style="left:191px;top:68px">Synopsis</div>
<div class="p" style="left:191px;top:84px;color:#555">Lorem ipsum dolor sit amet, consectetuer adipiscing<br>elit. Maecenas porttitor congue massa. Fusce posuere,<br>magna sed pulvinar ultricies, purus lectus malesuada<br>libero, sit amet commodo magna eros quis urna. Nunc<br>viverra imperdiet enim. Fusce est. Vivamus a tellus.<br>Pellentesque habitant morbi tristique senectus et<br>netus et malesuada fames ac turpis egestas. Proin<br>pharetra nonummy pede. Mauris et orci. Aenean nec<br>lorem. In porttitor. Donec laoreet nonummy augue.</div>
<div class="h" style="left:191px;top:212px">Background &amp; Setting</div>
<div class="p" style="left:191px;top:234.6px">Lorem ipsum dolor sit <u>amet</u>, <u>consectetuer</u><br><u>adipiscing</u> <u>elit</u>. Maecenas <u>porttitor</u> <u>congue</u> <u>massa</u>.<br><b style="font-size:7.7px;position:relative;top:0.6px"><u>Fusce</u> <u>posuere</u>, magna sed <u>pulvina</u></b></div>
<div class="lab" style="left:191px;top:273.5px">LOCATION</div>
<div class="v" style="left:191px;top:280px">Lorem, IP</div>
<div class="lab" style="left:191px;top:295.2px">YEAR</div>
<div class="v" style="left:191px;top:301.6px">20XX</div>
<div class="lab" style="left:239px;top:273.5px">LOREM</div>
<div class="v" style="left:239px;top:280px"><u>Lorem</u> ipsum dolor</div>
<div class="lab" style="left:239px;top:295.2px">LOREM</div>
<div class="v" style="left:239px;top:301.6px"><u>Lorem</u> ipsum dolor</div>
<div class="lab" style="left:322px;top:273.5px">LOREM</div>
<div class="v" style="left:322px;top:280px"><u>Lorem</u> ipsum</div>
<div class="lab" style="left:322px;top:295.2px">LOREM</div>
<div class="v" style="left:322px;top:301.6px"><u>Lorem</u> ipsum</div>
<div class="h" style="left:188.6px;top:347.7px">Plotline</div>
<div class="ssn" style="left:188px;top:370.6px">SEASON 1</div>
<div class="p" style="left:188px;top:381.3px;line-height:11.2px">Lorem ipsum dolor sit <u>amet</u>, <u>consectetuer</u> <u>adipiscing</u><br><u>elit</u>. Maecenas <u>porttitor</u> <u>congue</u> <u>massa</u> <u>posere</u>.</div>
<div class="ssn" style="left:188px;top:421.9px">SEASON 2</div>
<div class="p" style="left:188px;top:433.6px">Lorem ipsum dolor sit <u>amet</u>, <u>consectetuer</u> <u>adipiscing</u>.</div>
<div class="p" style="left:188px;top:444.3px;font-size:6.5px;color:#999"><b style="color:#7a7a7a">Release Date:</b> Lorem 20XX</div>
<div class="ssn" style="left:188px;top:470.6px">SEASON 3</div>
<div class="p" style="left:188px;top:481.3px;line-height:11.2px">Lorem ipsum dolor sit <u>amet</u>, <u>consectetuer</u> <u>adipiscing</u><br><u>elit</u>. Maecenas <u>porttitor</u> <u>congue</u> <u>massa</u>.</div>
<div class="sel" style="position:absolute;left:191.5px;top:533.2px;width:126.5px;height:15.5px;background:#b5b5b5"></div>
<div class="h" style="left:192px;top:534.7px;color:#333">Target Audience</div>
<div class="p" style="left:191px;top:557.5px;font-size:8.8px;line-height:11.8px"><span>Lorem ipsum</span><br>dolor sit <u>amet</u>,<br><u>consectetuer</u><br><u>adipiscing</u> <u>elit</u>.</div>
<div class="circ" style="left:253px;top:555px;width:64px;height:64px"></div>
<div class="circ" style="left:305px;top:542px;width:88px;height:88px"></div>
<div style="position:absolute;left:305px;top:566px;width:9.5px;height:38px;border:0.6px dashed #aaa;border-radius:50%;background:#efe9df"></div>
<div class="m" style="left:251.5px;width:64px;top:569.5px;font-size:11px;font-weight:bold;color:#111"><u>xxM</u></div>
<div class="m" style="left:251.5px;width:64px;top:583.5px;font-size:6.5px;line-height:8px;color:#333">Lorem<br>ipsum<br>dolor</div>
<div class="m" style="left:305px;width:88px;top:571.5px;font-size:11px;font-weight:bold;color:#111"><u>xxM</u></div>
<div class="m" style="left:305px;width:88px;top:585.5px;font-size:6.5px;line-height:8px;color:#333">Lorem ipsum<br>dolor</div>
<div class="sel" style="left:187px;top:529.7px;width:134px;height:23.1px;border:0.8px dotted #777"></div>
<div class="sel" style="left:255px;top:516px;width:0.8px;height:14px;background:#777"></div>
<svg class="sel" style="position:absolute;left:249px;top:505px" width="13" height="13" viewBox="0 0 13 13"><path d="M10.5 4A5 5 0 1 0 11 8" fill="none" stroke="#555" stroke-width="1.1"/><path d="M12 2v3.5H8.5" fill="none" stroke="#555" stroke-width="1.1"/><circle cx="6" cy="6.5" r="2.3" fill="none" stroke="#555" stroke-width="0.9"/></svg>
<div class="hd sel" style="left:184.4px;top:527.1px"></div>
<div class="hd sel" style="left:251.4px;top:527.1px"></div>
<div class="hd sel" style="left:318.4px;top:527.1px"></div>
<div class="hd sel" style="left:184.4px;top:538.6px"></div>
<div class="hd sel" style="left:318.4px;top:538.6px"></div>
<div class="hd sel" style="left:184.4px;top:550.2px"></div>
<div class="hd sel" style="left:251.4px;top:550.2px"></div>
<div class="hd sel" style="left:318.4px;top:550.2px"></div>
<!-- RIGHT -->
<div class="h" style="left:420.5px;top:68px">Episodes</div>
<div class="ep" style="left:420.5px;top:85.4px"><div class="et"><span>EP.1</span> <em>—</em> Your Title Here</div><div class="p7"><u>Lorem</u> ipsum dolor sit <u>amet</u>, <u>consectetuer</u><br><u>adipiscing</u> <u>elit</u>. Maecenas <u>porttitor</u> <u>congue</u><br><u>massa</u>. <u>Fusce</u> <u>posuere</u>, magna sed pulvinar<br><u>ultricies</u>, <u>purus</u> <u>lectus</u> <u>malesuada</u> libero.</div></div>
<div class="ep" style="left:420.5px;top:147.8px"><div class="et"><span>EP.2</span> <em>—</em> Your Title Here</div><div class="p7">Lorem ipsum dolor sit <u>amet</u>, <u>consectetuer</u><br><u>adipiscing</u> <u>elit</u>. Maecenas <u>porttitor</u> <u>congue</u><br><u>massa</u>. <u>Fusce</u> <u>posuere</u>, magna sed pulvinar<br><u>ultricies</u>, <u>purus</u> <u>lectus</u> <u>malesuada</u> libero.</div></div>
<div class="ep" style="left:420.5px;top:210.2px"><div class="et"><span>EP.3</span> <em>—</em> Your Title Here</div><div class="p7">Lorem ipsum dolor sit <u>amet</u>, <u>consectetuer</u><br><u>adipiscing</u> <u>elit</u>. Maecenas <u>porttitor</u> <u>congue</u><br><u>massa</u>. <u>Fusce</u> <u>posuere</u>, magna sed pulvinar<br><u>ultricies</u>, <u>purus</u> <u>lectus</u> <u>malesuada</u> libero.</div></div>
<div class="ep" style="left:420.5px;top:272.1px"><div class="et"><span>EP.4</span> <em>—</em> Your Title Here</div><div class="p7">Lorem ipsum dolor sit <u>amet</u>, <u>consectetuer</u><br><u>adipiscing</u> <u>elit</u>. Maecenas <u>porttitor</u> <u>congue</u><br><u>massa</u>. <u>Fusce</u> <u>posuere</u>, magna sed pulvinar<br><u>ultricies</u>, <u>purus</u> <u>lectus</u> <u>malesuada</u> libero.</div></div>
<div class="ep" style="left:420.5px;top:334.6px"><div class="et"><span>EP.5</span> <em>—</em> Your Title Here</div><div class="p7">Lorem ipsum dolor sit <u>amet</u>, <u>consectetuer</u><br><u>adipiscing</u> <u>elit</u>. Maecenas <u>porttitor</u> <u>congue</u><br><u>massa</u>. <u>Fusce</u> <u>posuere</u>, magna sed pulvinar<br><u>ultricies</u>, <u>purus</u> <u>lectus</u> <u>malesuada</u> libero.</div></div>
<div class="h" style="left:420.5px;top:418.4px">Show Format</div>
<div class="p" style="left:420.5px;top:437px;line-height:11px">Lorem ipsum dolor sit <u>amet</u>,<br><u>consectetuer</u> <u>adipiscing</u> <u>elit</u></div>
<div class="lab" style="left:420.5px;top:468.6px">GENRE</div>
<div class="v" style="left:420.5px;top:475.3px">Lorem, IP</div>
<div class="lab" style="left:420.5px;top:489.9px">MEDIUM</div>
<div class="v" style="left:420.5px;top:496.3px">20XX</div>
<div class="lab" style="left:474.7px;top:468.6px">FORMAT</div>
<div class="v" style="left:474.7px;top:475.3px">Lorem ipsum</div>
<div class="lab" style="left:474.7px;top:489.9px">RELEASE</div>
<div class="v" style="left:474.7px;top:496.3px">Lorem ipsum</div>
<div class="h" style="left:420.5px;top:533.1px">Show Format</div>
<div class="p" style="left:420.5px;top:549.8px">Lorem ipsum dolor sit <u>amet</u>,<br><u>consectetur</u> <u>adipiscing</u> <u>elit</u></div>
<div class="book" style="left:421.4px;top:580.5px"><i>Book<br>Cover</i><svg style="position:absolute;left:6px;top:16px" width="16" height="16" viewBox="0 0 16 16"><path d="M6 1c3-1 6 1 6 4 0 2-1 3-1 4 1 0 3-1 4 0 0 2-2 4-4 4-1 0-2 1-2 2-1 0-1-1-2-1-2 0-4-1-5-3 0-1 1-2 1-3-1-1-2-3-1-4 1-2 2-3 4-3z" fill="#c4c4c4"/><path d="M7 4c1 1 1 3 0 4M5 10c1 0 2 1 2 2" fill="none" stroke="#888" stroke-width="0.6"/></svg></div>
<div class="x" style="left:453px;top:599px">×</div>
<div class="book" style="left:463.2px;top:580.5px"><i>Book<br>Cover</i><svg style="position:absolute;left:6px;top:16px" width="16" height="16" viewBox="0 0 16 16"><path d="M6 1c3-1 6 1 6 4 0 2-1 3-1 4 1 0 3-1 4 0 0 2-2 4-4 4-1 0-2 1-2 2-1 0-1-1-2-1-2 0-4-1-5-3 0-1 1-2 1-3-1-1-2-3-1-4 1-2 2-3 4-3z" fill="#c4c4c4"/><path d="M7 4c1 1 1 3 0 4M5 10c1 0 2 1 2 2" fill="none" stroke="#888" stroke-width="0.6"/></svg></div>
<div class="x" style="left:496px;top:599px">×</div>
<div class="book" style="left:507px;top:580.5px"><i>Book<br>Cover</i><svg style="position:absolute;left:6px;top:16px" width="16" height="16" viewBox="0 0 16 16"><path d="M6 1c3-1 6 1 6 4 0 2-1 3-1 4 1 0 3-1 4 0 0 2-2 4-4 4-1 0-2 1-2 2-1 0-1-1-2-1-2 0-4-1-5-3 0-1 1-2 1-3-1-1-2-3-1-4 1-2 2-3 4-3z" fill="#c4c4c4"/><path d="M7 4c1 1 1 3 0 4M5 10c1 0 2 1 2 2" fill="none" stroke="#888" stroke-width="0.6"/></svg></div>
<!-- FOOTER -->
<div class="ft"></div>
<div class="jd" style="left:45px;top:656.5px">John Doe<small>Role, IP Title</small><p>Lorem ipsum dolor sit amet, consectetuer adipiscing<br>elit. Maecenas porttitor congue massa.</p></div>
<div class="jd" style="left:225.3px;top:656.5px">John Doe<small>Role, IP Title</small><p>Lorem ipsum dolor sit amet, consectetuer adipiscing<br>elit. Maecenas porttitor congue massa.</p></div>
<div class="jd" style="left:405.5px;top:656.5px">John Doe<small>Role, IP Title</small><p>Lorem ipsum dolor sit amet, consectetuer adipiscing<br>elit. Maecenas porttitor congue massa.</p></div>
<div class="fb"><span>YOURNAME@EMAIL.COM · WWW.YOURWEBSITE.COM · 555-555-5555</span><span>LOREM IPSUM DOLOR SIT AMET CONSECTETUER</span></div>
</div>
</div></div></div><div id="vdiv"></div><div id="canvas"><div class="sc"><div class="sl">
<div class="hdr"><span>YOUR TV SHOW PITCH</span></div>
<div class="vl" style="left:176px;top:51px;height:587px"></div>
<div class="vl" style="left:402px;top:51px;height:587px"></div>
<div class="hl" style="left:0;width:176px;top:218px"></div>
<div class="hl" style="left:0;width:176px;top:391px"></div>
<div class="hl" style="left:0;width:176px;top:536px"></div>
<div class="hl" style="left:176px;width:226px;top:203px"></div>
<div class="hl" style="left:176px;width:226px;top:332px"></div>
<div class="hl" style="left:176px;width:226px;top:521px"></div>
<div class="hl" style="left:402px;width:176px;top:403px"></div>
<div class="hl" style="left:402px;width:176px;top:521px"></div>
<!-- LEFT -->
<div class="h" style="left:25px;top:68px">Overview</div>
<div class="img" style="left:22px;top:85px;width:133px;height:58px"><span>Your Show Name</span></div>
<div class="p" style="left:25px;top:152px;color:#444">Lorem ipsum dolor sit amet, consectetuer<br>adipiscing elit. Maecenas porttitor congue<br>massa. Fusce posuere, magna sed pulvinar<br>ultricies, purus lectus malesuada libero.</div>
<div class="h" style="left:25.5px;top:233.5px">Logline</div>
<div class="p" style="left:25px;top:257px">Lorem ipsum dolor sit <u>amet</u>,<br><u>consectetuer</u> <u>adipiscing</u> <u>elit</u>.<br>Maecenas <u>porttitor</u> <u>congue</u> <u>massa</u>.<br><u>Fusce</u> <u>posere</u>, magna sed pulvinar<br><u>ultricies</u>. Purus <u>lectus</u> <u>malesuada</u><br>libero, sit <u>amet</u> <u>commodo</u> magna<br>eros <u>quis</u> <u>urna</u>.</div>
<div class="p" style="left:25px;top:336.5px">Nunc <u>viverra</u> <u>imperdiet</u> <u>enim</u>.<br>Maecenas <u>porttitor</u> <u>congue</u> <u>massa</u>.<br><u>Fusce</u> <u>posere</u>.</div>
<div class="h" style="left:25px;top:409px">Financials</div>
<div class="big" style="left:24.5px;top:431.5px">$XXM</div>
<div class="b" style="left:78px;top:442px;font-size:7.5px">raise amount</div>
<div class="p" style="left:25px;top:453px;line-height:11.2px;color:#505050">Lorem ipsum dolor sit <u>amet</u>,<br><u>consectetuer</u> <u>adipiscing</u> e</div>
<div class="vl" style="left:25.5px;top:478px;height:35px;background:#ccc"></div>
<div class="b" style="left:33px;top:482px;font-size:5.7px;color:#222">COMPARABLES</div>
<div class="p" style="left:33px;top:491px;font-size:7px;line-height:10.7px;color:#666"><u>olor</u> sit <u>amet</u>, <u>consectetuer</u> <u>adipi</u><br><u>cing</u> <u>elit</u>. Maecenas <u>porttitor</u> <u>congu</u></div>
<div class="h" style="left:25.5px;top:553.5px">Our Partners</div>
<div class="p" style="left:25px;top:573.4px;color:#111"><b>## lorem</b> ipsum dolor sit <u>amet</u>:</div>
<div class="logo" style="left:28.1px;top:593.5px"><svg width="16" height="16" viewBox="0 0 16 16"><path d="M8 1.4l5.9 3.4v6.8L8 15 2.1 11.6V4.8z" fill="none" stroke="#8d98a2" stroke-width="2.7" stroke-linejoin="round"/><path d="M4.5 11.5c1.2-1.6 5.8-1.6 7 0" fill="none" stroke="#8d98a2" stroke-width="1"/></svg><i>placeholder</i></div>
<div class="logo" style="left:63.0px;top:593.5px"><svg width="16" height="16" viewBox="0 0 16 16"><path d="M8 1.4l5.9 3.4v6.8L8 15 2.1 11.6V4.8z" fill="none" stroke="#8d98a2" stroke-width="2.7" stroke-linejoin="round"/><path d="M4.5 11.5c1.2-1.6 5.8-1.6 7 0" fill="none" stroke="#8d98a2" stroke-width="1"/></svg><i>placeholder</i></div>
<div class="logo" style="left:96.0px;top:593.5px"><svg width="16" height="16" viewBox="0 0 16 16"><path d="M8 1.4l5.9 3.4v6.8L8 15 2.1 11.6V4.8z" fill="none" stroke="#8d98a2" stroke-width="2.7" stroke-linejoin="round"/><path d="M4.5 11.5c1.2-1.6 5.8-1.6 7 0" fill="none" stroke="#8d98a2" stroke-width="1"/></svg><i>placeholder</i></div>
<div class="logo" style="left:128.4px;top:592.7px"><svg width="16" height="16" viewBox="0 0 16 16"><path d="M8 1.4l5.9 3.4v6.8L8 15 2.1 11.6V4.8z" fill="none" stroke="#8d98a2" stroke-width="2.7" stroke-linejoin="round"/><path d="M4.5 11.5c1.2-1.6 5.8-1.6 7 0" fill="none" stroke="#8d98a2" stroke-width="1"/></svg><i>placeholder</i></div>
<!-- MIDDLE -->
<div class="h" style="left:191px;top:68px">Synopsis</div>
<div class="p" style="left:191px;top:84px;color:#555">Lorem ipsum dolor sit amet, consectetuer adipiscing<br>elit. Maecenas porttitor congue massa. Fusce posuere,<br>magna sed pulvinar ultricies, purus lectus malesuada<br>libero, sit amet commodo magna eros quis urna. Nunc<br>viverra imperdiet enim. Fusce est. Vivamus a tellus.<br>Pellentesque habitant morbi tristique senectus et<br>netus et malesuada fames ac turpis egestas. Proin<br>pharetra nonummy pede. Mauris et orci. Aenean nec<br>lorem. In porttitor. Donec laoreet nonummy augue.</div>
<div class="h" style="left:191px;top:212px">Background &amp; Setting</div>
<div class="p" style="left:191px;top:234.6px">Lorem ipsum dolor sit <u>amet</u>, <u>consectetuer</u><br><u>adipiscing</u> <u>elit</u>. Maecenas <u>porttitor</u> <u>congue</u> <u>massa</u>.<br><b style="font-size:7.7px;position:relative;top:0.6px"><u>Fusce</u> <u>posuere</u>, magna sed <u>pulvina</u></b></div>
<div class="lab" style="left:191px;top:273.5px">LOCATION</div>
<div class="v" style="left:191px;top:280px">Lorem, IP</div>
<div class="lab" style="left:191px;top:295.2px">YEAR</div>
<div class="v" style="left:191px;top:301.6px">20XX</div>
<div class="lab" style="left:239px;top:273.5px">LOREM</div>
<div class="v" style="left:239px;top:280px"><u>Lorem</u> ipsum dolor</div>
<div class="lab" style="left:239px;top:295.2px">LOREM</div>
<div class="v" style="left:239px;top:301.6px"><u>Lorem</u> ipsum dolor</div>
<div class="lab" style="left:322px;top:273.5px">LOREM</div>
<div class="v" style="left:322px;top:280px"><u>Lorem</u> ipsum</div>
<div class="lab" style="left:322px;top:295.2px">LOREM</div>
<div class="v" style="left:322px;top:301.6px"><u>Lorem</u> ipsum</div>
<div class="h" style="left:188.6px;top:347.7px">Plotline</div>
<div class="ssn" style="left:188px;top:370.6px">SEASON 1</div>
<div class="p" style="left:188px;top:381.3px;line-height:11.2px">Lorem ipsum dolor sit <u>amet</u>, <u>consectetuer</u> <u>adipiscing</u><br><u>elit</u>. Maecenas <u>porttitor</u> <u>congue</u> <u>massa</u> <u>posere</u>.</div>
<div class="ssn" style="left:188px;top:421.9px">SEASON 2</div>
<div class="p" style="left:188px;top:433.6px">Lorem ipsum dolor sit <u>amet</u>, <u>consectetuer</u> <u>adipiscing</u>.</div>
<div class="p" style="left:188px;top:444.3px;font-size:6.5px;color:#999"><b style="color:#7a7a7a">Release Date:</b> Lorem 20XX</div>
<div class="ssn" style="left:188px;top:470.6px">SEASON 3</div>
<div class="p" style="left:188px;top:481.3px;line-height:11.2px">Lorem ipsum dolor sit <u>amet</u>, <u>consectetuer</u> <u>adipiscing</u><br><u>elit</u>. Maecenas <u>porttitor</u> <u>congue</u> <u>massa</u>.</div>
<div class="sel" style="position:absolute;left:191.5px;top:533.2px;width:126.5px;height:15.5px;background:#b5b5b5"></div>
<div class="h" style="left:192px;top:534.7px;color:#333">Target Audience</div>
<div class="p" style="left:191px;top:557.5px;font-size:8.8px;line-height:11.8px"><span>Lorem ipsum</span><br>dolor sit <u>amet</u>,<br><u>consectetuer</u><br><u>adipiscing</u> <u>elit</u>.</div>
<div class="circ" style="left:253px;top:555px;width:64px;height:64px"></div>
<div class="circ" style="left:305px;top:542px;width:88px;height:88px"></div>
<div style="position:absolute;left:305px;top:566px;width:9.5px;height:38px;border:0.6px dashed #aaa;border-radius:50%;background:#efe9df"></div>
<div class="m" style="left:251.5px;width:64px;top:569.5px;font-size:11px;font-weight:bold;color:#111"><u>xxM</u></div>
<div class="m" style="left:251.5px;width:64px;top:583.5px;font-size:6.5px;line-height:8px;color:#333">Lorem<br>ipsum<br>dolor</div>
<div class="m" style="left:305px;width:88px;top:571.5px;font-size:11px;font-weight:bold;color:#111"><u>xxM</u></div>
<div class="m" style="left:305px;width:88px;top:585.5px;font-size:6.5px;line-height:8px;color:#333">Lorem ipsum<br>dolor</div>
<div class="sel" style="left:187px;top:529.7px;width:134px;height:23.1px;border:0.8px dotted #777"></div>
<div class="sel" style="left:255px;top:516px;width:0.8px;height:14px;background:#777"></div>
<svg class="sel" style="position:absolute;left:249px;top:505px" width="13" height="13" viewBox="0 0 13 13"><path d="M10.5 4A5 5 0 1 0 11 8" fill="none" stroke="#555" stroke-width="1.1"/><path d="M12 2v3.5H8.5" fill="none" stroke="#555" stroke-width="1.1"/><circle cx="6" cy="6.5" r="2.3" fill="none" stroke="#555" stroke-width="0.9"/></svg>
<div class="hd sel" style="left:184.4px;top:527.1px"></div>
<div class="hd sel" style="left:251.4px;top:527.1px"></div>
<div class="hd sel" style="left:318.4px;top:527.1px"></div>
<div class="hd sel" style="left:184.4px;top:538.6px"></div>
<div class="hd sel" style="left:318.4px;top:538.6px"></div>
<div class="hd sel" style="left:184.4px;top:550.2px"></div>
<div class="hd sel" style="left:251.4px;top:550.2px"></div>
<div class="hd sel" style="left:318.4px;top:550.2px"></div>
<!-- RIGHT -->
<div class="h" style="left:420.5px;top:68px">Episodes</div>
<div class="ep" style="left:420.5px;top:85.4px"><div class="et"><span>EP.1</span> <em>—</em> Your Title Here</div><div class="p7"><u>Lorem</u> ipsum dolor sit <u>amet</u>, <u>consectetuer</u><br><u>adipiscing</u> <u>elit</u>. Maecenas <u>porttitor</u> <u>congue</u><br><u>massa</u>. <u>Fusce</u> <u>posuere</u>, magna sed pulvinar<br><u>ultricies</u>, <u>purus</u> <u>lectus</u> <u>malesuada</u> libero.</div></div>
<div class="ep" style="left:420.5px;top:147.8px"><div class="et"><span>EP.2</span> <em>—</em> Your Title Here</div><div class="p7">Lorem ipsum dolor sit <u>amet</u>, <u>consectetuer</u><br><u>adipiscing</u> <u>elit</u>. Maecenas <u>porttitor</u> <u>congue</u><br><u>massa</u>. <u>Fusce</u> <u>posuere</u>, magna sed pulvinar<br><u>ultricies</u>, <u>purus</u> <u>lectus</u> <u>malesuada</u> libero.</div></div>
<div class="ep" style="left:420.5px;top:210.2px"><div class="et"><span>EP.3</span> <em>—</em> Your Title Here</div><div class="p7">Lorem ipsum dolor sit <u>amet</u>, <u>consectetuer</u><br><u>adipiscing</u> <u>elit</u>. Maecenas <u>porttitor</u> <u>congue</u><br><u>massa</u>. <u>Fusce</u> <u>posuere</u>, magna sed pulvinar<br><u>ultricies</u>, <u>purus</u> <u>lectus</u> <u>malesuada</u> libero.</div></div>
<div class="ep" style="left:420.5px;top:272.1px"><div class="et"><span>EP.4</span> <em>—</em> Your Title Here</div><div class="p7">Lorem ipsum dolor sit <u>amet</u>, <u>consectetuer</u><br><u>adipiscing</u> <u>elit</u>. Maecenas <u>porttitor</u> <u>congue</u><br><u>massa</u>. <u>Fusce</u> <u>posuere</u>, magna sed pulvinar<br><u>ultricies</u>, <u>purus</u> <u>lectus</u> <u>malesuada</u> libero.</div></div>
<div class="ep" style="left:420.5px;top:334.6px"><div class="et"><span>EP.5</span> <em>—</em> Your Title Here</div><div class="p7">Lorem ipsum dolor sit <u>amet</u>, <u>consectetuer</u><br><u>adipiscing</u> <u>elit</u>. Maecenas <u>porttitor</u> <u>congue</u><br><u>massa</u>. <u>Fusce</u> <u>posuere</u>, magna sed pulvinar<br><u>ultricies</u>, <u>purus</u> <u>lectus</u> <u>malesuada</u> libero.</div></div>
<div class="h" style="left:420.5px;top:418.4px">Show Format</div>
<div class="p" style="left:420.5px;top:437px;line-height:11px">Lorem ipsum dolor sit <u>amet</u>,<br><u>consectetuer</u> <u>adipiscing</u> <u>elit</u></div>
<div class="lab" style="left:420.5px;top:468.6px">GENRE</div>
<div class="v" style="left:420.5px;top:475.3px">Lorem, IP</div>
<div class="lab" style="left:420.5px;top:489.9px">MEDIUM</div>
<div class="v" style="left:420.5px;top:496.3px">20XX</div>
<div class="lab" style="left:474.7px;top:468.6px">FORMAT</div>
<div class="v" style="left:474.7px;top:475.3px">Lorem ipsum</div>
<div class="lab" style="left:474.7px;top:489.9px">RELEASE</div>
<div class="v" style="left:474.7px;top:496.3px">Lorem ipsum</div>
<div class="h" style="left:420.5px;top:533.1px">Show Format</div>
<div class="p" style="left:420.5px;top:549.8px">Lorem ipsum dolor sit <u>amet</u>,<br><u>consectetur</u> <u>adipiscing</u> <u>elit</u></div>
<div class="book" style="left:421.4px;top:580.5px"><i>Book<br>Cover</i><svg style="position:absolute;left:6px;top:16px" width="16" height="16" viewBox="0 0 16 16"><path d="M6 1c3-1 6 1 6 4 0 2-1 3-1 4 1 0 3-1 4 0 0 2-2 4-4 4-1 0-2 1-2 2-1 0-1-1-2-1-2 0-4-1-5-3 0-1 1-2 1-3-1-1-2-3-1-4 1-2 2-3 4-3z" fill="#c4c4c4"/><path d="M7 4c1 1 1 3 0 4M5 10c1 0 2 1 2 2" fill="none" stroke="#888" stroke-width="0.6"/></svg></div>
<div class="x" style="left:453px;top:599px">×</div>
<div class="book" style="left:463.2px;top:580.5px"><i>Book<br>Cover</i><svg style="position:absolute;left:6px;top:16px" width="16" height="16" viewBox="0 0 16 16"><path d="M6 1c3-1 6 1 6 4 0 2-1 3-1 4 1 0 3-1 4 0 0 2-2 4-4 4-1 0-2 1-2 2-1 0-1-1-2-1-2 0-4-1-5-3 0-1 1-2 1-3-1-1-2-3-1-4 1-2 2-3 4-3z" fill="#c4c4c4"/><path d="M7 4c1 1 1 3 0 4M5 10c1 0 2 1 2 2" fill="none" stroke="#888" stroke-width="0.6"/></svg></div>
<div class="x" style="left:496px;top:599px">×</div>
<div class="book" style="left:507px;top:580.5px"><i>Book<br>Cover</i><svg style="position:absolute;left:6px;top:16px" width="16" height="16" viewBox="0 0 16 16"><path d="M6 1c3-1 6 1 6 4 0 2-1 3-1 4 1 0 3-1 4 0 0 2-2 4-4 4-1 0-2 1-2 2-1 0-1-1-2-1-2 0-4-1-5-3 0-1 1-2 1-3-1-1-2-3-1-4 1-2 2-3 4-3z" fill="#c4c4c4"/><path d="M7 4c1 1 1 3 0 4M5 10c1 0 2 1 2 2" fill="none" stroke="#888" stroke-width="0.6"/></svg></div>
<!-- FOOTER -->
<div class="ft"></div>
<div class="jd" style="left:45px;top:656.5px">John Doe<small>Role, IP Title</small><p>Lorem ipsum dolor sit amet, consectetuer adipiscing<br>elit. Maecenas porttitor congue massa.</p></div>
<div class="jd" style="left:225.3px;top:656.5px">John Doe<small>Role, IP Title</small><p>Lorem ipsum dolor sit amet, consectetuer adipiscing<br>elit. Maecenas porttitor congue massa.</p></div>
<div class="jd" style="left:405.5px;top:656.5px">John Doe<small>Role, IP Title</small><p>Lorem ipsum dolor sit amet, consectetuer adipiscing<br>elit. Maecenas porttitor congue massa.</p></div>
<div class="fb"><span>YOURNAME@EMAIL.COM · WWW.YOURWEBSITE.COM · 555-555-5555</span><span>LOREM IPSUM DOLOR SIT AMET CONSECTETUER</span></div>
</div>
</div></div><div style="position:absolute;left:1021.5px;top:53px;width:2.5px;height:422px;background:#151515"></div><div style="position:absolute;left:1022px;top:57px;width:2px;height:2px;background:#444"></div>
<div id="notes"><span>Click to add notes</span></div>
<div id="status">
<div class="t" style="left:2px">Slide 1 of 1</div>
<svg style="position:absolute;left:45px;top:3px" width="7" height="7" viewBox="0 0 7 7"><path d="M0.5 6.5v-6h5v3M3 4l1.5 2L7 3" fill="none" stroke="#bbb" stroke-width="0.8"/></svg>
<div class="t" style="left:59.5px">English (United States)</div>
<svg style="position:absolute;left:131px;top:2px" width="8" height="9" viewBox="0 0 8 9"><circle cx="4" cy="1.5" r="1.2" fill="#ccc"/><path d="M0.5 3h7M4 3v3M2 8.5L4 6l2 2.5" fill="none" stroke="#ccc" stroke-width="0.9"/></svg>
<div class="t" style="left:141px;font-weight:bold;font-size:5.7px">Accessibility: Investigate</div>
<svg style="position:absolute;left:734px;top:2px" width="8" height="8" viewBox="0 0 8 8"><path d="M2 2l2-2 2 2M0.5 4h7M0.5 5.7h7M0.5 7.4h7" fill="none" stroke="#ccc" stroke-width="0.8"/></svg>
<div class="t" style="left:744.5px">Notes</div>
<svg style="position:absolute;left:769px;top:2px" width="10" height="8" viewBox="0 0 10 8"><rect x="0.5" y="0.5" width="8" height="6" fill="none" stroke="#ccc" stroke-width="0.8"/><rect x="4" y="3.5" width="5.5" height="4" fill="#1b1b1b" stroke="#ccc" stroke-width="0.8"/></svg>
<div class="t" style="left:780px">Display Settings</div>
<div style="position:absolute;left:837px;top:0;width:18px;height:12px;background:#333"></div>
<svg style="position:absolute;left:842px;top:2.5px" width="8" height="7" viewBox="0 0 8 7"><rect x="0.5" y="0.5" width="7" height="6" fill="none" stroke="#ddd" stroke-width="0.8"/><path d="M2.5 0.5v4h5" fill="none" stroke="#ddd" stroke-width="0.8"/></svg>
<svg style="position:absolute;left:864px;top:2.5px" width="8" height="7" viewBox="0 0 8 7"><rect x="0.5" y="0.5" width="2.8" height="2.5" fill="none" stroke="#ccc" stroke-width="0.7"/><rect x="4.5" y="0.5" width="2.8" height="2.5" fill="none" stroke="#ccc" stroke-width="0.7"/><rect x="0.5" y="4" width="2.8" height="2.5" fill="none" stroke="#ccc" stroke-width="0.7"/><rect x="4.5" y="4" width="2.8" height="2.5" fill="none" stroke="#ccc" stroke-width="0.7"/></svg>
<svg style="position:absolute;left:884px;top:2.5px" width="8" height="7" viewBox="0 0 8 7"><path d="M0.5 0.5h3v6h-3zM3.5 0.5h4v6h-4z" fill="none" stroke="#ccc" stroke-width="0.7"/></svg>
<svg style="position:absolute;left:907px;top:2px" width="8" height="9" viewBox="0 0 8 9"><path d="M0.5 0.5h7M1 0.5v5h6v-5M4 5.5v3M2.5 8.5h3" fill="none" stroke="#ccc" stroke-width="0.8"/></svg>
<div style="position:absolute;left:922px;top:6px;width:5px;height:0.8px;background:#ccc"></div>
<div style="position:absolute;left:931px;top:6px;width:56px;height:0.8px;background:#888"></div>
<div style="position:absolute;left:947px;top:3px;width:2.5px;height:6px;background:#ddd"></div>
<div style="position:absolute;left:957.5px;top:5px;width:1px;height:3px;background:#999"></div>
<div class="t" style="left:988.5px;top:1.5px;font-size:8px">+</div>
<div class="t" style="left:998px">66%</div>
<svg style="position:absolute;left:1017px;top:2px" width="8" height="8" viewBox="0 0 8 8"><rect x="1" y="1" width="6" height="6" fill="none" stroke="#ccc" stroke-width="0.8"/></svg>
</div>
</body></html>
